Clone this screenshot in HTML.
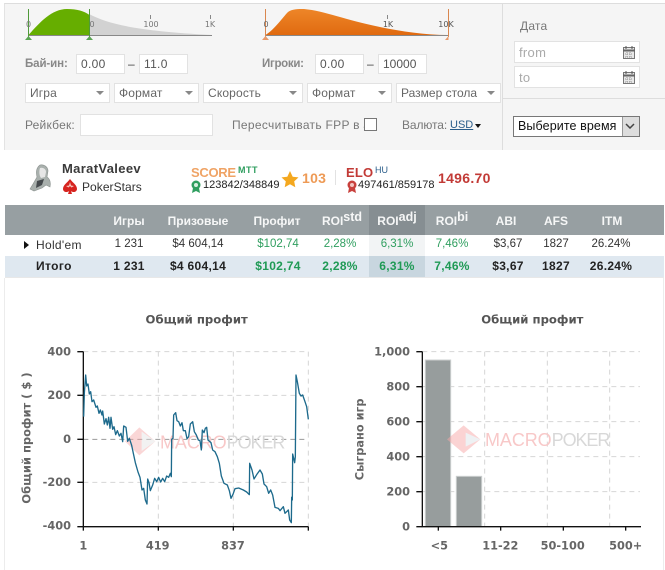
<!DOCTYPE html>
<html><head><meta charset="utf-8"><style>
html,body{margin:0;padding:0}
body{width:665px;height:570px;position:relative;overflow:hidden;background:#fff;font-family:"Liberation Sans",sans-serif;font-size:12px;color:#666}
.a{position:absolute;white-space:nowrap}
.c{position:absolute;white-space:nowrap;transform:translateX(-50%)}
.inp{position:absolute;background:#fff;border:1px solid #e2e2e2;box-sizing:border-box;height:20px;line-height:18px;padding-left:4px;color:#555;font-size:12px;letter-spacing:.3px}
.sel{position:absolute;background:#fff;border:1px solid #e2e2e2;box-sizing:border-box;height:20px;line-height:18px;padding-left:4px;color:#666;font-size:12px;top:83px;letter-spacing:.15px}
.sel:after{content:"";position:absolute;right:5px;top:7px;border:4px solid transparent;border-top:4px solid #888;border-bottom:0}
.lb{color:#777;font-size:12px;letter-spacing:.2px}
.th{position:absolute;white-space:nowrap;transform:translateX(-50%);top:214px;color:#fff;font-weight:bold;font-size:12px;opacity:.92}
.th sup{font-size:12.500px;line-height:0;vertical-align:4px}
.r1{position:absolute;white-space:nowrap;transform:translateX(-50%);top:238px;color:#333;font-size:11.500px;letter-spacing:0}
.r2{position:absolute;white-space:nowrap;transform:translateX(-50%);top:259px;color:#222;font-size:12px;font-weight:bold;letter-spacing:.3px}
.g{color:#2f9e5f}.r2.g{color:#1f9a55}
svg{position:absolute;left:0;top:0}
svg text{font-family:"DejaVu Sans",sans-serif}
</style></head><body>

<div class="a" style="left:4px;top:3px;width:661px;height:147px;background:#f5f5f5;border-top:1px solid #ddd;border-left:1px solid #e3e3e3;box-sizing:border-box"></div>
<div class="a" style="left:502px;top:4px;width:1px;height:146px;background:#ddd"></div>
<div class="a" style="left:502px;top:98px;width:163px;height:1px;background:#ddd"></div>

<svg width="665" height="60" viewBox="0 0 665 60">
  <line x1="28" y1="35.500" x2="212" y2="35.500" stroke="#888" stroke-width="1"/>
  <path d="M89 14C110 25 140 31 212 35L89 35Z" fill="#d2d2d2"/>
  <path d="M28.500 35C40 22 52 9 67 9C77 9 84 11 89.500 15L89.500 35Z" fill="#66ae00"/>
  <path d="M28.500 9V37M89.500 9V37" stroke="#4f9a3a" stroke-width="1"/>
  <path d="M25 40L28.500 36L32 40ZM86 40L89.500 36L93 40Z" fill="#5aa552"/>
  <path d="M150.500 15V19M210.500 15V19" stroke="#888"/>
  <text x="28.500" y="27" font-size="8" fill="#777" text-anchor="middle">0</text>
  <text x="92" y="27" font-size="8" fill="#777" text-anchor="middle">0</text>
  <text x="151" y="27" font-size="8" fill="#777" text-anchor="middle">100</text>
  <text x="210" y="27" font-size="8" fill="#777" text-anchor="middle">1K</text>

  <line x1="265" y1="35.500" x2="448" y2="35.500" stroke="#888"/>
  <defs><linearGradient id="og" x1="0" y1="0" x2="0" y2="1"><stop offset="0" stop-color="#ee8628"/><stop offset="1" stop-color="#e06a10"/></linearGradient></defs>
  <path d="M265.500 35C275 29 283 17 288 12C292 9 298 9 304 9C325 11 345 20 380 27C400 31 425 35 448 35Z" fill="url(#og)"/>
  <path d="M265.500 9V37M448.500 9V37" stroke="#d9874f"/>
  <path d="M262 40L265.500 36L269 40ZM445 40L448.500 36V40Z" fill="#e89a6a"/>
  <path d="M387.500 15V19" stroke="#888"/>
  <text x="266" y="27" font-size="8" fill="#666" text-anchor="middle">0</text>
  <text x="388" y="27" font-size="8" fill="#555" text-anchor="middle">1K</text>
  <text x="446" y="27" font-size="8" fill="#555" text-anchor="middle">10K</text>
</svg>

<div class="a lb" style="left:25px;top:58px;font-size:11.500px;letter-spacing:-.1px;font-weight:bold;color:#888">Бай-ин:</div>
<div class="inp" style="left:76px;top:54px;width:49px">0.00</div>
<div class="a" style="left:128px;top:57px;color:#444">–</div>
<div class="inp" style="left:139px;top:54px;width:49px">11.0</div>
<div class="a lb" style="left:262px;top:58px;font-size:11.500px;letter-spacing:-.3px;font-weight:bold;color:#888">Игроки:</div>
<div class="inp" style="left:315px;top:54px;width:49px">0.00</div>
<div class="a" style="left:367px;top:57px;color:#444">–</div>
<div class="inp" style="left:378px;top:54px;width:49px;letter-spacing:0">10000</div>

<div class="sel" style="left:25px;width:85px">Игра</div>
<div class="sel" style="left:114px;width:85px">Формат</div>
<div class="sel" style="left:203px;width:100px">Скорость</div>
<div class="sel" style="left:307px;width:85px">Формат</div>
<div class="sel" style="left:396px;width:105px;letter-spacing:0">Размер стола</div>

<div class="a lb" style="left:25px;top:118px">Рейкбек:</div>
<div class="inp" style="left:80px;top:114px;width:133px;height:22px"></div>
<div class="a lb" style="left:232px;top:118px;letter-spacing:.3px">Пересчитывать FPP в $</div>
<div class="a" style="left:364px;top:118px;width:13px;height:13px;box-sizing:border-box;border:1px solid #777;background:#fff"></div>
<div class="a lb" style="left:402px;top:118px;letter-spacing:-.1px">Валюта:</div>
<div class="a" style="left:450px;top:119px;color:#2a5d8a;text-decoration:underline;font-size:11px">USD</div>
<div class="a" style="left:475px;top:124px;border:3.500px solid transparent;border-top:4px solid #111;border-bottom:0"></div>

<div class="a lb" style="left:520px;top:19px">Дата</div>
<div class="inp" style="left:514px;top:41px;width:126px;height:22px;color:#aaa;line-height:21px;font-size:13px">from</div>
<div class="inp" style="left:514px;top:66px;width:126px;height:22px;color:#aaa;line-height:21px;font-size:13px">to</div>
<svg width="665" height="100" viewBox="0 0 665 100">
  <g id="cal" fill="none" stroke="#777">
    <rect x="623.500" y="47.500" width="11" height="11" fill="#e8e8e8"/>
    <path d="M623 50.500H635" stroke="#666" stroke-width="2"/>
    <path d="M626 46V49M632 46V49" stroke="#555"/>
    <path d="M625 54H633M625 57H633M627 52V58M630 52V58" stroke="#999" stroke-dasharray="1 1"/>
    <rect x="623.500" y="72.500" width="11" height="11" fill="#e8e8e8"/>
    <path d="M623 75.500H635" stroke="#666" stroke-width="2"/>
    <path d="M626 71V74M632 71V74" stroke="#555"/>
    <path d="M625 79H633M625 82H633M627 77V83M630 77V83" stroke="#999" stroke-dasharray="1 1"/>
  </g>
</svg>
<div class="a" style="left:513px;top:116px;width:127px;height:21px;box-sizing:border-box;border:1px solid #777;background:#fff;color:#111;font-size:12.500px;line-height:19px;padding-left:4px;letter-spacing:.1px">Выберите время
  <div style="position:absolute;right:0;top:0;width:17px;height:19px;background:#ddd;border-left:1px solid #999;box-sizing:border-box"></div>
  <svg width="10" height="6" style="left:111px;top:6px"><path d="M1 1L5 5L9 1" fill="none" stroke="#444" stroke-width="1.500"/></svg>
</div>

<!-- profile -->
<svg width="665" height="205" viewBox="0 0 665 205">
  <g transform="translate(28,164)">
    <path d="M12 1C16 0 20 3 20 7L19 13C22 15 23 19 22 23L18 21L14 24L6 27L2 25L5 20L9 13C8 9 8 4 12 1Z" fill="#a9b0ad" stroke="#8c9390" stroke-width=".6"/>
    <path d="M12 4C15 3 18 5 18 8L17 13L13 14C11 11 11 7 12 4Z" fill="#e6e6e6"/>
    <path d="M9 17L16 15L14 21L8 24Z" fill="#454a4d"/>
  </g>
  <g transform="translate(63,179)">
    <path d="M7 0C10 4 14 6 14 10C14 13 10 14 8 12L9 15H5L6 12C4 14 0 13 0 10C0 6 4 4 7 0Z" fill="#d6231f"/>
    <path d="M7 3L8 6.500L11 7L8.500 8.500L7 7L5.500 8.500L3 7L6 6.500Z" fill="#f6c8c0"/>
  </g>
  <g transform="translate(190,180)">
    <circle cx="6" cy="5" r="4.500" fill="#2f9e5f"/><circle cx="6" cy="5" r="2" fill="#d9f0e0"/>
    <path d="M3 8L2 13L6 11L10 13L9 8Z" fill="#2f9e5f"/>
  </g>
  <path d="M290 171L292.700 176.700L298.500 177.400L294.200 181.400L295.300 187.200L290 184.300L284.700 187.200L285.800 181.400L281.500 177.400L287.300 176.700Z" fill="#f4a81f"/>
  <line x1="335.500" y1="170" x2="335.500" y2="185" stroke="#e2e2e2"/>
  <g transform="translate(346,180)">
    <circle cx="6" cy="5" r="4.500" fill="#c8403c"/><circle cx="6" cy="5" r="2" fill="#f2c4c0"/>
    <path d="M3 8L2 13L6 11L10 13L9 8Z" fill="#c8403c"/>
  </g>
</svg>
<div class="a" style="left:62px;top:161px;font-size:13px;font-weight:bold;color:#3a3a3a;letter-spacing:.35px">MaratValeev</div>
<div class="a" style="left:82px;top:180px;font-size:12px;color:#333;letter-spacing:.05px">PokerStars</div>
<div class="a" style="left:191px;top:165px;font-size:13px;color:#ee9a55;letter-spacing:-.3px;font-weight:bold;opacity:.9">SCORE</div>
<div class="a" style="left:238px;top:165px;font-size:9px;color:#2f9e5f;font-weight:bold;letter-spacing:.5px">MTT</div>
<div class="a" style="left:203px;top:179px;font-size:11px;color:#222;letter-spacing:0">123842/348849</div>
<div class="a" style="left:302px;top:170px;font-size:14px;font-weight:bold;color:#ee9a55;letter-spacing:.3px">103</div>
<div class="a" style="left:346px;top:165px;font-size:13px;font-weight:bold;color:#c23a36;letter-spacing:.2px">ELO</div>
<div class="a" style="left:375px;top:165px;font-size:9px;color:#2a5d8a">HU</div>
<div class="a" style="left:358px;top:179px;font-size:11px;color:#222;letter-spacing:0">497461/859178</div>
<div class="a" style="left:438px;top:170px;font-size:14px;font-weight:bold;color:#c23a36;letter-spacing:.3px">1496.70</div>

<!-- table -->
<div class="a" style="left:5px;top:205px;width:659px;height:30px;background:#979fa2"></div>
<div class="a" style="left:5px;top:256px;width:659px;height:21px;background:#dfe8f0"></div>
<div class="a" style="left:5px;top:277px;width:659px;height:1px;background:#e8e8e8"></div>
<div class="a" style="left:369px;top:205px;width:56px;height:30px;background:#868e92"></div>
<div class="a" style="left:369px;top:235px;width:56px;height:21px;background:#f2f4f5"></div>
<div class="a" style="left:369px;top:256px;width:56px;height:21px;background:#c8d6df"></div>
<div class="th" style="left:129px">Игры</div>
<div class="th" style="left:198px">Призовые</div>
<div class="th" style="left:277px">Профит</div>
<div class="th" style="left:342px">ROI<sup>std</sup></div>
<div class="th" style="left:397px">ROI<sup>adj</sup></div>
<div class="th" style="left:452px">ROI<sup>bi</sup></div>
<div class="th" style="left:506px">ABI</div>
<div class="th" style="left:556px">AFS</div>
<div class="th" style="left:612px">ITM</div>

<div class="a" style="left:24px;top:241px;border:4px solid transparent;border-left:5px solid #111;border-right:0"></div>
<div class="a" style="left:36px;top:238px;color:#333;letter-spacing:.3px">Hold'em</div>
<div class="r1" style="left:129px">1 231</div>
<div class="r1" style="left:198px">$4 604,14</div>
<div class="r1 g" style="left:278px">$102,74</div>
<div class="r1 g" style="left:340px">2,28%</div>
<div class="r1 g" style="left:397px">6,31%</div>
<div class="r1 g" style="left:452px">7,46%</div>
<div class="r1" style="left:508px">$3,67</div>
<div class="r1" style="left:556px">1827</div>
<div class="r1" style="left:611px">26.24%</div>

<div class="a" style="left:36px;top:259px;color:#222;font-weight:bold;letter-spacing:.4px">Итого</div>
<div class="r2" style="left:129px">1 231</div>
<div class="r2" style="left:198px">$4 604,14</div>
<div class="r2 g" style="left:278px">$102,74</div>
<div class="r2 g" style="left:340px">2,28%</div>
<div class="r2 g" style="left:397px">6,31%</div>
<div class="r2 g" style="left:452px">7,46%</div>
<div class="r2" style="left:508px">$3,67</div>
<div class="r2" style="left:556px">1827</div>
<div class="r2" style="left:611px">26.24%</div>

<div class="a" style="left:4px;top:278px;width:1px;height:292px;background:#ececec"></div>
<div class="a" style="left:663px;top:278px;width:1px;height:292px;background:#ececec"></div>

<!-- left chart -->
<svg width="330" height="270" viewBox="0 0 990 810" style="left:0;top:300px">
  <g stroke="#d6d6d6" stroke-width="3" stroke-dasharray="15 12" fill="none">
    <path d="M250 155H925M250 286H925M250 547H925M475 155V680M700 155V680M925 155V680"/>
    <path d="M250 418H925" stroke="#999"/>
  </g>
  <g opacity=".45">
    <path d="M418 382L466 424L418 466L375 424Z" fill="#f6a6a6"/>
    <path d="M425 395L466 424L425 453Z" fill="#e4e4e4"/>
  </g>
  <text x="480" y="445" font-size="54" fill="#f8c8c8" style="font-family:'Liberation Sans',sans-serif" textLength="200">MACRO</text>
  <text x="680" y="445" font-size="54" fill="#d8d8d8" style="font-family:'Liberation Sans',sans-serif" textLength="176">POKER</text>
  <path d="M250 155V680H925" fill="none" stroke="#111" stroke-width="4"/>
  <path d="M232 155H250M232 286H250M232 418H250M232 547H250M232 680H250M250 680V692M475 680V692M700 680V692M925 680V692" stroke="#111" stroke-width="4"/>
  <path fill="none" stroke="#1d6a8c" stroke-width="4" stroke-linejoin="round" d="M251 350L253 280L257 225L260 258L264 252L268 282L272 275L276 305L281 300L288 322L292 318L297 340L301 330L306 345L308 333L313 372L318 356L322 375L326 352L330 385L333 352L338 388L342 380L347 404L352 392L358 408L363 400L368 425L371 378L378 382L383 424L388 415L395 436L400 460L406 488L414 516L420 532L426 570L431 565L436 600L441 612L443 537L447 548L451 572L458 555L464 535L470 545L476 532L482 546L488 535L494 545L500 528L506 532L511 520L514 530L515 418L519 415L521 345L527 338L531 362L536 365L541 378L546 368L550 392L556 392L561 416L566 410L571 372L578 365L583 395L589 405L595 420L600 422L604 450L607 390L612 398L616 385L620 382L624 420L633 428L638 450L645 455L652 470L658 490L664 528L672 550L682 555L688 572L693 595L699 583L705 566L716 564L730 570L740 576L748 584L749 490L756 510L762 537L770 524L780 510L787 522L792 552L800 560L806 580L812 570L818 585L825 622L835 625L840 632L850 620L855 640L865 630L869 660L874 668L875 592L877 600L878 462L884 488L886 470L888 225L892 245L898 280L903 288L908 285L915 305L920 320L925 358"/>
  <g font-size="34" font-weight="bold" fill="#666" text-anchor="end">
    <text x="213" y="166">400</text>
    <text x="213" y="297">200</text>
    <text x="213" y="429">0</text>
    <text x="213" y="558">-200</text>
    <text x="213" y="689">-400</text>
  </g>
  <g font-size="34" font-weight="bold" fill="#666" text-anchor="middle">
    <text x="250" y="749">1</text>
    <text x="473" y="749">419</text>
    <text x="699" y="749">837</text>
    <text x="590" y="70" fill="#555" font-size="35">Общий профит</text>
    <text transform="translate(92,414) rotate(-90)" font-size="34.500">Общий профит ( $ )</text>
  </g>
</svg>

<!-- right chart -->
<svg width="330" height="270" viewBox="0 0 990 810" style="left:335px;top:300px">
  <g stroke="#d6d6d6" stroke-width="3" stroke-dasharray="15 12" fill="none">
    <path d="M262 155H915M262 260H915M262 365H915M262 470H915M262 575H915M449 155V680M637 155V680M824 155V680"/>
  </g>
  <rect x="271" y="180" width="76" height="500" fill="#979d9d" stroke="#ccd0d0" stroke-width="3"/>
  <rect x="364" y="529" width="76" height="151" fill="#979d9d" stroke="#ccd0d0" stroke-width="3"/>
  <g opacity=".5">
    <path d="M386 376L436 418L386 460L336 418Z" fill="#f8a8a8"/>
    <path d="M392 398L436 418L392 440Z" fill="#dfe4e8"/>
  </g>
  <text x="450" y="438" font-size="54" fill="#f8c8c8" style="font-family:'Liberation Sans',sans-serif" textLength="200">MACRO</text>
  <text x="650" y="438" font-size="54" fill="#d8d8d8" style="font-family:'Liberation Sans',sans-serif" textLength="176">POKER</text>
  <path d="M262 155V680H918" fill="none" stroke="#111" stroke-width="4"/>
  <path d="M244 155H262M244 260H262M244 365H262M244 470H262M244 575H262M244 680H262M310 680V692M497 680V692M685 680V692M872 680V692" stroke="#111" stroke-width="4"/>
  <g font-size="34" font-weight="bold" fill="#666" text-anchor="end">
    <text x="225" y="166">1,000</text>
    <text x="225" y="271">800</text>
    <text x="225" y="376">600</text>
    <text x="225" y="481">400</text>
    <text x="225" y="586">200</text>
    <text x="225" y="691">0</text>
  </g>
  <g font-size="34" font-weight="bold" fill="#666" text-anchor="middle">
    <text x="313" y="749">&lt;5</text>
    <text x="496" y="749">11-22</text>
    <text x="683" y="749">50-100</text>
    <text x="872" y="749">500+</text>
    <text x="592" y="70" fill="#555" font-size="35">Общий профит</text>
    <text transform="translate(85,418) rotate(-90)" font-size="34">Сыграно игр</text>
  </g>
</svg>
</body></html>
